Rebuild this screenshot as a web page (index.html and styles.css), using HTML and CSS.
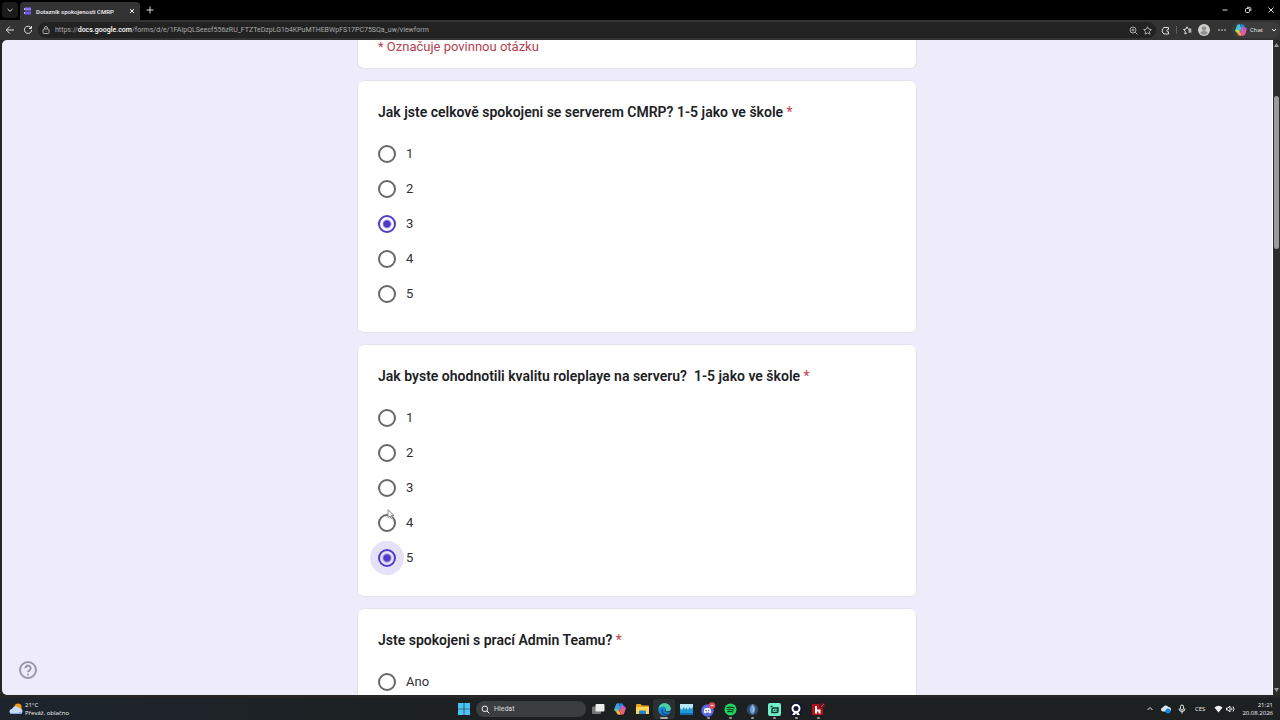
FILE: index.html
```
<!DOCTYPE html>
<html lang="cs">

<head>
  <meta charset="UTF-8">
  <meta name="viewport" content="width=device-width, initial-scale=1.0">
  <title>Dotazník spokojenosti CMRP</title>
  <link rel="stylesheet" href="styles.css">
</head>

<body>
  <header class="browser">
    <div class="tabs">
      <button class="tab-list" aria-label="Karty"><svg width="8" height="8" viewBox="0 0 8 8"><path d="M1.500 3 4 5.300 6.500 3"/></svg></button>
      <div class="tab">
        <svg class="fill" width="8" height="8" viewBox="0 0 8 8"><rect x="1" y="0.500" width="6" height="3" fill="#8b74ff"/><rect x="1" y="4.500" width="6" height="3" fill="#7358f5"/><path d="M0 1h1v2H0zM0 5h1v2H0z" fill="#b9a8ff"/></svg>
        <span class="tab-title">Dotazník spokojenosti CMRP</span>
        <button aria-label="Zavřít kartu"><svg width="8" height="8" viewBox="0 0 8 8"><path d="m2 2 4 4M6 2 2 6"/></svg></button>
      </div>
      <button class="new-tab" aria-label="Nová karta"><svg width="8" height="8" viewBox="0 0 8 8"><path d="M4 .5v7M.5 4h7"/></svg></button>
      <div class="window-buttons">
        <button aria-label="Minimalizovat"><svg width="8" height="8" viewBox="0 0 8 8"><path d="M1.500 4h5"/></svg></button>
        <button aria-label="Obnovit"><svg width="8" height="8" viewBox="0 0 8 8"><rect x="1.500" y="2.500" width="4" height="4" rx="1"/><path d="M3 1.300h2.500q1.300 0 1.300 1.300V5"/></svg></button>
        <button aria-label="Zavřít"><svg width="8" height="8" viewBox="0 0 8 8"><path d="m1.500 1.500 5 5M6.500 1.500l-5 5"/></svg></button>
      </div>
    </div>
    <div class="toolbar">
      <button aria-label="Zpět"><svg width="10" height="10" viewBox="0 0 10 10"><path d="M9 5H1.500M4.800 1.500 1.300 5l3.500 3.500"/></svg></button>
      <button class="reload" aria-label="Obnovit stránku"><svg width="10" height="10" viewBox="0 0 10 10"><path d="M8.200 3.200A3.600 3.600 0 1 0 8.600 5M8.500 1v2.500H6"/></svg></button>
      <div class="address">
        <svg width="8" height="8" viewBox="0 0 8 8"><rect x="1" y="3" width="6" height="4.500" rx="1"/><path d="M2.500 3V2a1.500 1.500 0 0 1 3 0v1M4 4.800v.8"/></svg>
        <span class="url">https://<b>docs.google.com</b>/forms/d/e/1FAIpQLSeecf556zRU_FTZTeDzpLG1b4KPuMTHEBWpFS17PC75SQa_uw/viewform</span>
        <button aria-label="Lupa"><svg width="9" height="9" viewBox="0 0 9 9"><circle cx="4" cy="4" r="3"/><path d="m6.200 6.200 2.300 2.300M2.500 4h3M4 2.500v3"/></svg></button>
        <button aria-label="Přidat k oblíbeným"><svg width="9" height="9" viewBox="0 0 9 9"><path d="m4.500.7 1.200 2.500 2.700.4-2 1.900.5 2.700-2.400-1.300-2.400 1.300.5-2.700-2-1.900 2.700-.4z"/></svg></button>
      </div>
      <div class="tools">
        <button aria-label="Rozšíření"><svg width="9" height="9" viewBox="0 0 9 9"><path d="M3 1.500h4.500v2a1.200 1.200 0 1 0 0 2.300V8H3L1.300 6V3.200z"/></svg></button>
        <span class="divider"></span>
        <button aria-label="Oblíbené"><svg width="9" height="9" viewBox="0 0 9 9"><path d="M5.500 3.500 4 .8 2.900 3.100.5 3.500l1.800 1.800L1.900 8 4 6.900M5.300 4h3.200M5.300 6h3.200M7 2v4"/></svg></button>
        <button aria-label="Profil"><svg class="fill" width="12" height="12" viewBox="0 0 12 12"><circle cx="6" cy="6" r="6" fill="#d0cfce"/><circle cx="6" cy="4.500" r="2.200" fill="#92908e"/><path d="M2.300 9.500q0-2.500 3.700-2.500t3.700 2.500Q6 12 2.300 9.500" fill="#92908e"/></svg></button>
        <button class="more" aria-label="Nastavení"><svg class="fill" width="8" height="8" viewBox="0 0 8 8"><circle cx="1" cy="4" r=".8"/><circle cx="4" cy="4" r=".8"/><circle cx="7" cy="4" r=".8"/></svg></button>
        <button class="chat">
          <svg class="copilot" width="12" height="12" viewBox="0 0 12 12"><path d="M5.500 1.800H7q.8 0 1 .8L8.500 4.500" stroke="#2486ed"/><path d="M5 1.800H4q-.8 0-1 .8L2 6q-.3 1.200.8 1.200H4L5.500 2.500" stroke="#3fc5d2"/><path d="M2 5.800Q1.600 7.200 2.800 7.200H4" stroke="#c4da39"/><path d="M3.500 8 4 9.500q.3.700 1 .7h1.300" stroke="#f6a337"/><path d="M6.300 10.200H8q.8 0 1-.8L10 6q.3-1.200-.8-1.200H8L6.500 9.500" stroke="#e859a5"/><path d="M8.200 4.800h1q1.100 0 .8 1.200" stroke="#a25be4"/></svg>
          Chat
          <svg class="chevron" width="6" height="6" viewBox="0 0 6 6"><path d="m1 2 2 2 2-2"/></svg>
        </button>
      </div>
    </div>
  </header>

  <div class="viewport">
    <main class="page">
      <form class="form">
        <section class="card intro">
          <p class="note">* Označuje povinnou otázku</p>
        </section>

        <fieldset class="card">
          <legend>Jak jste celkově spokojeni se serverem CMRP? 1-5 jako ve škole <span class="required">*</span></legend>
          <label class="option"><input type="radio" name="server"> 1</label>
          <label class="option"><input type="radio" name="server"> 2</label>
          <label class="option"><input type="radio" name="server" checked> 3</label>
          <label class="option"><input type="radio" name="server"> 4</label>
          <label class="option"><input type="radio" name="server"> 5</label>
        </fieldset>

        <fieldset class="card">
          <legend>Jak byste ohodnotili kvalitu roleplaye na serveru?&nbsp; 1-5 jako ve škole <span class="required">*</span></legend>
          <label class="option"><input type="radio" name="roleplay"> 1</label>
          <label class="option"><input type="radio" name="roleplay"> 2</label>
          <label class="option"><input type="radio" name="roleplay"> 3</label>
          <label class="option hovered"><input type="radio" name="roleplay"> 4
            <svg class="cursor" width="8" height="11" viewBox="0 0 8 11"><path d="M1 .7v8l2-1.700 1.200 2.700 1.300-.6-1.200-2.600H7z"/></svg>
          </label>
          <label class="option"><input class="ripple" type="radio" name="roleplay" checked> 5</label>
        </fieldset>

        <fieldset class="card">
          <legend>Jste spokojeni s prací Admin Teamu? <span class="required">*</span></legend>
          <label class="option"><input type="radio" name="admin"> Ano</label>
        </fieldset>
      </form>
      <button class="help" aria-label="Nápověda"><svg width="18" height="18" viewBox="0 0 18 18"><circle cx="9" cy="9" r="8"/><path d="M6.400 7.300a2.600 2.600 0 1 1 4.200 2Q9 10.300 9 11.300M9 12.700v1.600"/></svg></button>
    </main>
    <div class="scrollbar">
      <svg width="5" height="4" viewBox="0 0 5 4"><path d="M2.500 0 5 4H0z"/></svg>
      <div class="track"><div class="thumb"></div></div>
      <svg width="5" height="4" viewBox="0 0 5 4"><path d="M0 0h5L2.500 4z"/></svg>
    </div>
  </div>

  <footer class="taskbar">
    <button class="weather">
      <svg width="14" height="12" viewBox="0 0 14 12"><circle cx="9" cy="4" r="3.600" fill="#f39a22"/><path d="M3 11a2.500 2.500 0 0 1 0-5 3.700 3.700 0 0 1 6.800-1A3 3 0 0 1 11 11z" fill="#c8dcf8"/><path d="M1 9.500Q7 11 13 8.500 12.500 11 11 11H3q-1.500 0-2-1.500" fill="#84aae8"/></svg>
      <span>21°C<br>Převáž. oblačno</span>
    </button>
    <nav class="apps">
      <button class="app" aria-label="Start"><svg width="12" height="12" viewBox="0 0 12 12"><path d="M0 0h5.700v5.700H0zM6.300 0H12v5.700H6.300zM0 6.300h5.700V12H0zM6.300 6.300H12V12H6.300z" fill="#48c3f4"/></svg></button>
      <label class="search">
        <svg width="9" height="9" viewBox="0 0 9 9"><circle cx="3.800" cy="3.800" r="2.800"/><path d="m6 6 2.300 2.300"/></svg>
        <input type="text" placeholder="Hledat" aria-label="Hledat">
      </label>
      <button class="app" aria-label="Zobrazení úkolů"><svg width="13" height="12" viewBox="0 0 13 12"><rect x="0" y="3.500" width="9" height="7.500" rx="1" fill="#777"/><rect x="3.500" y="1" width="9" height="7.500" rx="1" fill="#ececec"/></svg></button>
      <button class="app" aria-label="Copilot"><svg class="copilot" width="12" height="12" viewBox="0 0 12 12"><path d="M5.500 1.800H7q.8 0 1 .8L8.500 4.500" stroke="#2486ed"/><path d="M5 1.800H4q-.8 0-1 .8L2 6q-.3 1.200.8 1.200H4L5.500 2.500" stroke="#3b9fe8"/><path d="M2 5.800Q1.600 7.200 2.800 7.200H4" stroke="#6bc887"/><path d="M3.500 8 4 9.500q.3.700 1 .7h1.300" stroke="#f6b337"/><path d="M6.300 10.200H8q.8 0 1-.8L10 6q.3-1.200-.8-1.200H8L6.500 9.500" stroke="#e8616f"/><path d="M8.200 4.800h1q1.100 0 .8 1.200" stroke="#b45be4"/></svg></button>
      <button class="app" aria-label="Průzkumník"><svg width="13" height="12" viewBox="0 0 13 12"><path d="M0 2q0-1 1-1h3.500L6 2.500h6q1 0 1 1V11H0z" fill="#e8a51e"/><path d="M0 4h13v6q0 1-1 1H1q-1 0-1-1z" fill="#ffd45a"/><path d="M3 11V8.500q0-1 1-1h5q1 0 1 1V11z" fill="#2583c9"/></svg></button>
      <button class="app active running" aria-label="Edge"><svg width="13" height="13" viewBox="0 0 13 13"><circle cx="6.500" cy="6.500" r="6.200" fill="#168bd5"/><path d="M.5 6C1.200 1.700 4 .3 6.500.3c4 0 6.200 2.700 6.200 5.300 0 2.200-1.600 3-3.200 3-1.700 0-2-.8-1.500-1.500C9 5 7 3.700 5 3.700 2.700 3.700.8 5 .5 6" fill="#4bd1a4"/><path d="M5.400 5.700C3.500 8.300 6 11.500 10.500 11 7 14 1.500 11 3.800 6.800q.7-1.100 1.600-1.100" fill="#0d4c9d"/><path d="M8 7.100q-1 1.500 1.500 1.500 2 0 3-1.300-.5 2-2.500 2.200C7 9.600 6 7 8 7.100" fill="#152733"/></svg></button>
      <button class="app" aria-label="Fotky"><svg width="13" height="11" viewBox="0 0 13 11"><path d="M0 0h13v11H0z" fill="#2297d8"/><path d="M0 0h13v3L11 5 9.500 3 8 6 6.500 3.500 5 5.500 3.500 3 2 6 0 4z" fill="#b9e8fb"/><path d="M0 9h13v2H0z" fill="#126bb0"/></svg></button>
      <button class="app running" aria-label="Discord"><svg width="16" height="15" viewBox="0 0 16 15"><circle cx="7.500" cy="8.500" r="6.200" fill="#5966e8"/><path d="M4.800 6.200q2.700-1 5.400 0Q11.500 8.500 11.300 10.500l-1.700.9-.7-1H6.100l-.7 1-1.700-.9Q3.500 8.500 4.800 6.200" fill="#fff"/><circle cx="6.200" cy="8.700" r=".8" fill="#5966e8"/><circle cx="8.800" cy="8.700" r=".8" fill="#5966e8"/><circle cx="12" cy="3.500" r="3.300" fill="#e34855"/><path d="M10.500 3.500h3M12 2.500v2" stroke="#ffc8cb"/></svg></button>
      <button class="app running" aria-label="Spotify"><svg width="13" height="13" viewBox="0 0 13 13"><circle cx="6.500" cy="6.500" r="6" fill="#20d660"/><path d="M3 4.600q4-1.200 7.200.5M3.500 6.700q3.200-1 6 .5M3.900 8.600q2.600-.7 4.900.5" fill="none" stroke="#123b20" stroke-width="1.100" stroke-linecap="round"/></svg></button>
      <button class="app running" aria-label="Aplikace"><svg width="13" height="13" viewBox="0 0 13 13"><circle cx="6.500" cy="6.500" r="5.800" fill="#2f4a6c"/><path d="M6.500 1Q9.800 3.500 9.300 7q-.5 3.500-3 4.500Q3.500 9.500 3.700 6.500 4 3.500 6.500 1" fill="#6b9bc8"/><path d="M6.500 3.500Q8.500 6 7 9" fill="none" stroke="#b4d3ee"/></svg></button>
      <button class="app running" aria-label="Streamlabs"><svg width="13" height="13" viewBox="0 0 13 13"><rect width="13" height="13" rx="2" fill="#70f0ca"/><path d="M2.500 3.500h2M4 9.500V6.500q0-1.500 1.500-1.500H10v3q0 1.500-1.500 1.500z" fill="none" stroke="#11362e" stroke-width="1.500"/><path d="M6.300 6.500v1.500M8.200 6.500v1.500" stroke="#11362e"/></svg></button>
      <button class="app running" aria-label="Kamera"><svg width="12" height="13" viewBox="0 0 12 13"><rect width="12" height="13" rx="2" fill="#151831"/><circle cx="6" cy="5.500" r="3.500" fill="none" stroke="#fff" stroke-width="2"/><path d="m4 9-2 3h3l1-2 1 2h3L8 9" fill="#fff"/></svg></button>
      <button class="app running" aria-label="Hra"><svg width="15" height="14" viewBox="0 0 15 14"><rect x="1" y="2" width="11" height="11" rx="1" fill="#b80f1b"/><path d="M5 4v7.500M5 8.500h3.500v3" fill="none" stroke="#fff" stroke-width="2"/><circle cx="11.500" cy="3.500" r="3" fill="#541a25"/><path d="m10 5 3-3" stroke="#df4353"/></svg></button>
    </nav>
    <div class="tray">
      <svg width="8" height="8" viewBox="0 0 8 8"><path d="m1.500 5 2.500-2.500L6.500 5"/></svg>
      <svg class="fill" width="10" height="10" viewBox="0 0 10 10"><path d="M2 7.500a2 2 0 0 1 0-4A3 3 0 0 1 7.500 3 2 2 0 0 1 8 7.500z" fill="#d8e5ee"/><circle cx="7" cy="7" r="2.500" fill="#1686dc"/></svg>
      <svg width="8" height="10" viewBox="0 0 8 10"><rect x="2.500" y="1" width="3" height="5" rx="1.500"/><path d="M1 4.500q0 3 3 3t3-3M4 7.500v2"/></svg>
      <span class="lang">CES</span>
      <div class="status">
        <svg class="fill" width="9" height="8" viewBox="0 0 9 8"><path d="M.5 2.500q4-3.300 8 0L4.500 7.500z"/></svg>
        <svg width="9" height="8" viewBox="0 0 9 8"><path d="M.5 3v2H2l2 2V1L2 3zM5.500 2.800q1 1.200 0 2.400M7 1.500q2.200 2.500 0 5"/></svg>
      </div>
      <time datetime="2026-08-20T21:21">21:21<br>20.08.2026</time>
    </div>
  </footer>
</body>

</html>
```
FILE: styles.css
```
* {
  box-sizing: border-box;
}

body {
  background: #262626;
  color: #dedede;
  display: flex;
  flex-direction: column;
  font-family: "Open Sans", "Noto Sans", sans-serif;
  font-size: 6px;
  height: 100vh;
  margin: 0;
  overflow: hidden;
}

button {
  align-items: center;
  background: none;
  border: 0;
  color: inherit;
  display: flex;
  font: inherit;
  justify-content: center;
  padding: 0;
}

button:hover {
  cursor: pointer;
}

svg {
  display: block;
  fill: none;
  flex: none;
  stroke: currentColor;
}

.fill,
.app svg,
.weather svg,
.scrollbar svg {
  fill: currentColor;
  stroke: none;
}

/* browser frame */
.tabs {
  align-items: center;
  background: #000;
  display: flex;
  height: 20px;
  padding-left: 2px;
}

.tab-list {
  background: #1b1b1b;
  border-radius: 4px;
  height: 16px;
  width: 16px;
}

.tab {
  align-items: center;
  align-self: flex-end;
  background: #333;
  border-radius: 4px 4px 0 0;
  color: #f2f2f2;
  display: flex;
  gap: 4px;
  height: 18px;
  margin-left: 2px;
  padding: 0 4px;
  width: 120px;
}

.tab-title {
  flex: 1;
  font-family: Roboto, sans-serif;
  font-weight: 500;
  white-space: nowrap;
}

.new-tab {
  margin-left: 6px;
}

.window-buttons {
  display: flex;
  gap: 15px;
  margin-left: auto;
  padding-right: 5px;
}

.toolbar {
  align-items: center;
  background: #333;
  display: flex;
  gap: 5px;
  height: 20px;
  padding-left: 5px;
}

.reload {
  margin-left: 3px;
}

.address {
  align-items: center;
  background: #222;
  border-radius: 8px;
  color: #aaa;
  display: flex;
  flex: 1;
  gap: 5px;
  height: 16px;
  padding: 0 4px;
}

.url {
  flex: 1;
  font-family: Roboto, sans-serif;
  font-size: 7px;
  white-space: nowrap;
}

.url b {
  color: #fff;
  font-weight: 500;
}

.tools {
  align-items: center;
  display: flex;
  gap: 6px;
}

.divider {
  background: #606060;
  height: 8px;
  width: 1px;
}

.more {
  margin-left: 2px;
}

.tools .chat {
  background: #3c3c3c;
  border-radius: 8px;
  color: #f2f2f2;
  gap: 3px;
  height: 16px;
  justify-content: flex-start;
  padding: 0 3px;
  width: 48px;
}

.copilot,
.app .copilot {
  fill: none;
  stroke-width: 3;
}

.chevron {
  margin-left: auto;
}

/* page */
.viewport {
  display: flex;
  flex: 1;
  min-height: 0;
  padding: 0 0 3px 2px;
}

.page {
  background: #eeecfa;
  border-radius: 5px 0 0 5px;
  flex: 1;
  overflow: hidden;
  position: relative;
}

.form {
  color: #202124;
  display: flex;
  flex-direction: column;
  font-family: Roboto, sans-serif;
  font-size: 13px;
  gap: 11px;
  margin: 0 auto;
  max-width: 560px;
}

.card {
  background: #fff;
  border: 1px solid #e3e1ee;
  border-radius: 7px;
  margin: 0;
  min-width: 0;
  padding: 20px 20px 21px;
}

.intro {
  border-radius: 0 0 7px 7px;
  border-top: 0;
  padding: 0 20px 14px;
}

.note {
  color: #b3424f;
  line-height: 14px;
  margin: 0;
}

.card legend {
  float: left;
  font-size: 14px;
  font-weight: 600;
  line-height: 22px;
  margin-bottom: 13px;
  padding: 0;
  width: 100%;
}

.required {
  color: #c5444f;
  font-weight: 400;
}

.option {
  align-items: center;
  clear: both;
  color: #303134;
  display: flex;
  gap: 10px;
  height: 35px;
}

.option input {
  appearance: none;
  background: #fff;
  border: 2px solid #66686c;
  border-radius: 50%;
  flex: none;
  height: 18px;
  margin: 0;
  width: 18px;
}

.option input:checked {
  background: radial-gradient(circle, #4e3bc8 3px, #fff 5px);
  border-color: #4e3bc8;
}

.option .ripple:checked {
  background: radial-gradient(circle, #4e3bc8 3px, #e5e1f8 5px);
  box-shadow: 0 0 0 8px #e5e1f8;
}

.hovered {
  position: relative;
}

.cursor {
  fill: #fff;
  left: 9px;
  position: absolute;
  stroke: #888;
  stroke-width: 1;
  top: 4px;
}

.help {
  bottom: 16px;
  color: #9997a8;
  left: 17px;
  position: absolute;
}

.help svg {
  stroke-width: 2;
}

.scrollbar {
  align-items: center;
  background: #2c2c2c;
  border-left: 1px solid #fff;
  color: #999;
  display: flex;
  flex-direction: column;
  gap: 4px;
  padding: 3px 0;
  width: 8px;
}

.track {
  flex: 1;
  padding-top: 45px;
}

.thumb {
  background: #9b9b9b;
  border-radius: 3px;
  height: 26%;
  width: 5px;
}

/* taskbar */
.taskbar {
  align-items: center;
  background: linear-gradient(90deg, #1d242c, #1c2020 40%, #1c2020);
  color: #f2f2f2;
  display: grid;
  grid-template-columns: 1fr auto 1fr;
  height: 22px;
}

.weather {
  gap: 2px;
  justify-self: start;
  line-height: 8px;
  padding-left: 9px;
  text-align: left;
}

.apps {
  align-items: center;
  display: flex;
  padding-left: 2px;
}

.app {
  border-radius: 3px;
  height: 20px;
  position: relative;
  width: 22px;
}

.active {
  background: #2b2f30;
}

.running::after {
  background: #969696;
  border-radius: 1px;
  bottom: 0;
  content: "";
  height: 2px;
  position: absolute;
  width: 3px;
}

.active::after {
  background: #aaa;
  width: 8px;
}

.search {
  align-items: center;
  background: #3a3e3f;
  border-radius: 8px;
  display: flex;
  gap: 4px;
  height: 16px;
  margin: 0 1px;
  padding: 0 5px;
  width: 110px;
}

.search input {
  background: none;
  border: 0;
  color: inherit;
  font-family: Roboto, sans-serif;
  font-size: 7px;
  min-width: 0;
  padding: 0;
}

.search input::placeholder {
  color: #ddd;
}

.tray {
  align-items: center;
  display: flex;
  gap: 7px;
  justify-self: end;
  padding-right: 7px;
}

.lang {
  margin: 0 2px;
}

.status {
  display: flex;
  gap: 3px;
}

.tray time {
  line-height: 8px;
  text-align: right;
}
```
